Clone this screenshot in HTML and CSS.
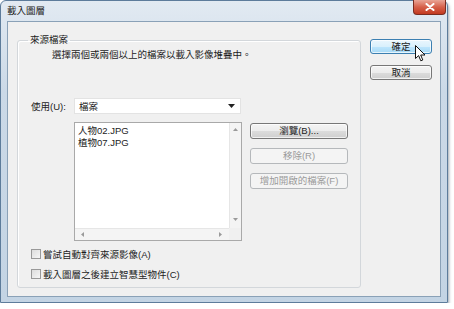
FILE: index.html
```html
<!DOCTYPE html>
<html lang="zh-Hant">
<head>
  <meta charset="UTF-8" />
  <title>載入圖層</title>
  <link rel="stylesheet" href="styles.css">
</head>
<body>
  <div class="window">
    <div class="titlebar">
      <span class="title">載入圖層</span>
      <div class="close">
        <svg width="10" height="8" viewBox="0 0 10 8"><path d="M1.5 1 L8.5 7 M8.5 1 L1.5 7" stroke="#fff" stroke-width="2" stroke-linecap="round"/></svg>
      </div>
    </div>

    <div class="client">
      <fieldset class="group">
        <legend>來源檔案</legend>
        <div class="desc">選擇兩個或兩個以上的檔案以載入影像堆疊中。</div>

        <div class="use-row">
          <label class="use-label">使用(U):</label>
          <div class="select">
            <span>檔案</span>
            <svg width="7" height="4" viewBox="0 0 7 4"><path d="M0 0 H7 L3.5 4 Z" fill="#222"/></svg>
          </div>
        </div>

        <div class="files-row">
          <div class="listbox">
            <div class="items">
              <div>人物02.JPG</div>
              <div>植物07.JPG</div>
            </div>
            <div class="vscroll">
              <svg width="5" height="3" viewBox="0 0 5 3"><path d="M0 3 L2.5 0 L5 3 Z" fill="#9a9a9a"/></svg>
              <svg width="5" height="3" viewBox="0 0 5 3"><path d="M0 0 L2.5 3 L5 0 Z" fill="#9a9a9a"/></svg>
            </div>
            <div class="hscroll">
              <svg width="3" height="5" viewBox="0 0 3 5"><path d="M3 0 L0 2.5 L3 5 Z" fill="#9a9a9a"/></svg>
              <svg width="3" height="5" viewBox="0 0 3 5"><path d="M0 0 L3 2.5 L0 5 Z" fill="#9a9a9a"/></svg>
            </div>
            <div class="corner"></div>
          </div>

          <div class="file-buttons">
            <button class="btn">瀏覽(B)...</button>
            <button class="btn" disabled>移除(R)</button>
            <button class="btn" disabled>增加開啟的檔案(F)</button>
          </div>
        </div>

        <div class="check"><span class="box"></span>嘗試自動對齊來源影像(A)</div>
        <div class="check"><span class="box"></span>載入圖層之後建立智慧型物件(C)</div>
      </fieldset>

      <div class="side-buttons">
        <button class="btn btn-ok">確定</button>
        <button class="btn">取消</button>
      </div>
    </div>
  </div>

  <!-- mouse pointer over the OK button -->
  <svg class="cursor" width="11" height="17" viewBox="0 0 11 17">
    <path d="M0.5 0.5 L0.5 13.5 L3.6 10.6 L5.8 15.8 L7.8 15 L5.7 10 L10 10 Z" fill="#fff" stroke="#111" stroke-width="1" stroke-linejoin="round"/>
  </svg>
</body>
</html>
```

FILE: styles.css
```css
html, body {
  margin: 0;
  padding: 0;
  background-color: #ffffff;
  font-family: "Liberation Sans", "Noto Sans CJK TC", sans-serif;
  font-size: 9.5px;
  color: #1c1c1c;
}

.window {
  width: 448px;
  height: 303px;
  box-sizing: border-box;
  display: flex;
  flex-direction: column;
  padding: 0 6px 5px 6px;
  border: 1px solid #5d7c9b;
  border-radius: 6px 6px 0 0;
  background: linear-gradient(#e2eaf2, #cbd9e7 30%, #c3d4e4);
  box-shadow: 1px 2px 3px rgba(40, 60, 80, 0.45);
}

.titlebar {
  height: 20px;
  display: flex;
  justify-content: space-between;
  align-items: flex-start;
}

.title {
  line-height: 20px;
  color: #222;
}

.close {
  width: 33px;
  height: 15px;
  margin-top: -1px;
  margin-right: -5px;
  box-sizing: border-box;
  display: flex;
  align-items: center;
  justify-content: center;
  border: 1px solid #7a2c20;
  border-top: none;
  border-radius: 0 0 4px 4px;
  background: linear-gradient(#e9a596, #d6614b 50%, #c2391f);
}

.client {
  flex: 1;
  display: flex;
  align-items: flex-start;
  padding-top: 12px;
  background-color: #f0f0f0;
  border: 1px solid #8aa1b7;
}

.group {
  width: 344px;
  height: 254px;
  box-sizing: border-box;
  margin: 0 0 0 9px;
  padding: 0 0 0 13px;
  border: 1px solid #d3d7db;
  border-radius: 3px;
  box-shadow: inset 1px 1px 0 #fff;
}

.group legend {
  margin-left: -3px;
  padding: 0 2px;
  line-height: 12px;
}

.desc {
  margin: 3px 0 0 21px;
  line-height: 12px;
}

.use-row {
  display: flex;
  align-items: center;
  margin-top: 37px;
  height: 16px;
}

.use-label {
  width: 43px;
}

.select {
  width: 167px;
  height: 16px;
  box-sizing: border-box;
  display: flex;
  justify-content: space-between;
  align-items: center;
  padding: 0 5px 0 4px;
  background-color: #fff;
  border: 1px solid #e3e3e3;
}

.files-row {
  display: flex;
  align-items: flex-start;
  margin-top: 8px;
}

.listbox {
  width: 168px;
  height: 119px;
  margin-left: 43px;
  box-sizing: border-box;
  display: grid;
  grid-template-columns: 1fr 12px;
  grid-template-rows: 1fr 12px;
  background-color: #fff;
  border: 1px solid #a9a9a9;
}

.items {
  padding: 2px 0 0 3px;
  line-height: 12px;
}

.vscroll {
  display: flex;
  flex-direction: column;
  justify-content: space-between;
  align-items: center;
  padding: 5px 0 7px;
  background-color: #f4f4f4;
  border-left: 1px solid #e6e6e6;
}

.hscroll {
  display: flex;
  justify-content: space-between;
  align-items: center;
  padding: 0 7px 0 6px;
  background-color: #f4f4f4;
  border-top: 1px solid #e6e6e6;
}

.corner {
  background-color: #f0f0f0;
}

.file-buttons {
  display: flex;
  flex-direction: column;
  gap: 9px;
  margin: 1px 0 0 8px;
  width: 98px;
}

.btn {
  height: 16px;
  width: 100%;
  padding: 0;
  font-family: inherit;
  font-size: 9.5px;
  line-height: 14px;
  color: #1c1c1c;
  border: 1px solid #777;
  border-radius: 3px;
  background: linear-gradient(#f4f4f4, #ececec 50%, #dcdcdc 51%, #cfcfcf);
  box-shadow: inset 0 0 0 1px rgba(255, 255, 255, 0.7);
}

.btn:disabled {
  color: #9b9b9b;
  border-color: #b5b8bb;
  background: #f4f4f4;
  box-shadow: none;
}

.check {
  display: flex;
  align-items: center;
  gap: 2px;
  height: 14px;
  margin-top: 6px;
}

.check .box {
  width: 10px;
  height: 10px;
  box-sizing: border-box;
  border: 1px solid #999;
  background: linear-gradient(135deg, #dcdcdc, #f6f6f6);
}

.side-buttons {
  display: flex;
  flex-direction: column;
  gap: 11px;
  width: 62px;
  margin: 5px 0 0 9px;
}

.side-buttons .btn {
  height: 15px;
}

.btn-ok {
  border-color: #3c7fb1;
  background: linear-gradient(#eaf6fd, #d9f0fc 50%, #bee6fd 51%, #a7d9f5);
}

.cursor {
  position: absolute;
  left: 415px;
  top: 45px;
}
```
